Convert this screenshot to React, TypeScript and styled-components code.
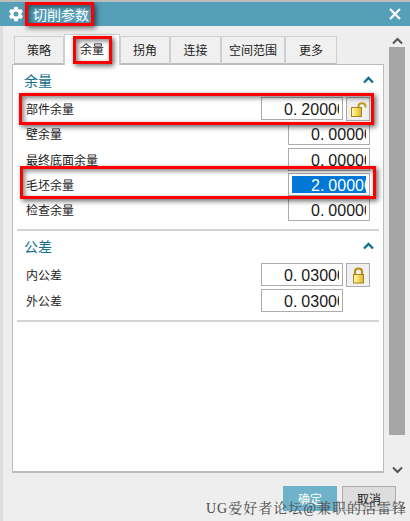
import * as React from 'react';
import styled, { createGlobalStyle } from 'styled-components';
import { IoSettingsSharp } from 'react-icons/io5';

const cjk = `"Noto Sans CJK SC", "Liberation Sans", sans-serif`;

const Global = createGlobalStyle`
  html, body {
    margin: 0;
    padding: 0;
    background: #eeeeee;
  }
`;

const Lock = ({ open }: { open?: boolean }) => {
  const id = open ? 'lock-open' : 'lock-closed';
  return (
    <svg width="18" height="18" viewBox="0 0 18 18">
      <defs>
        <linearGradient id={id} x1="0" y1="0" x2="1" y2="0">
          <stop offset="0" stopColor="#fff8b8" />
          <stop offset="0.45" stopColor="#f6e06a" />
          <stop offset="1" stopColor="#d8b02a" />
        </linearGradient>
      </defs>
      {open ? (
        <path d="M9.5 7.5V6C9.5 4 11 3.2 13 3.2S16.5 4 16.5 6V7.5" fill="none" stroke="#c89a18" strokeWidth="2" />
      ) : (
        <path d="M6 8.5V5.5C6 3.5 7.5 2.5 9.5 2.5S13 3.5 13 5.5V8.5" fill="none" stroke="#b98f18" strokeWidth="2.2" />
      )}
      <rect
        x={open ? 2.5 : 4.5}
        y={open ? 7.5 : 8.5}
        width={open ? 10 : 10}
        height={open ? 9 : 8.5}
        fill={`url(#${id})`}
        stroke="#a8831a"
      />
    </svg>
  );
};

const Chevron = ({ down, color, width }: { down?: boolean; color: string; width: number }) => (
  <svg width="11" height="8" viewBox="0 0 11 8">
    <path d={down ? 'M1 1.5L5.5 6L10 1.5' : 'M1 6.5L5.5 2L10 6.5'} fill="none" stroke={color} strokeWidth={width} />
  </svg>
);

// the dialog draws a wide gap after the decimal point
const NumberField = ({ value, selected }: { value: string; selected?: boolean }) => {
  const [whole, frac] = value.split('.');
  return (
    <Field>
      <Value $selected={selected}>
        {whole}.<Fraction>{frac}</Fraction>
      </Value>
    </Field>
  );
};

const tabs = ['策略', '余量', '拐角', '连接', '空间范围', '更多'];
const tabWidths = [50, 56, 50, 51, 64, 52];

const App = () => {
  return (
    <Page>
      <Global />
      <TitleBar>
        <IoSettingsSharp size={16} color="#ffffff" />
        <Title>切削参数</Title>
        <Close>
          <svg width="12" height="12" viewBox="0 0 12 12">
            <path d="M1 1L11 11M11 1L1 11" stroke="#ffffff" strokeWidth="2.2" />
          </svg>
        </Close>
      </TitleBar>
      <Body>
        <Main>
          <Tabs>
            {tabs.map((t, i) => (
              <Tab key={t} $active={i === 1} $width={tabWidths[i]}>{t}</Tab>
            ))}
          </Tabs>
          <Panel>
            <Section>
              <SectionHead>
                <SectionTitle>余量</SectionTitle>
                <Chevron color="#14708f" width={2.4} />
              </SectionHead>
              <Row>
                <Label>部件余量</Label>
                <NumberField value="0.20000" />
                <LockButton><Lock open /></LockButton>
              </Row>
              <Row $gap={3}>
                <Label>壁余量</Label>
                <NumberField value="0.00000" />
              </Row>
              <Row>
                <Label>最终底面余量</Label>
                <NumberField value="0.00000" />
              </Row>
              <Row>
                <Label>毛坯余量</Label>
                <NumberField value="2.00000" selected />
              </Row>
              <Row>
                <Label>检查余量</Label>
                <NumberField value="0.00000" />
              </Row>
            </Section>
            <Section>
              <SectionHead>
                <SectionTitle>公差</SectionTitle>
                <Chevron color="#14708f" width={2.4} />
              </SectionHead>
              <Row $gap={3}>
                <Label>内公差</Label>
                <NumberField value="0.03000" />
                <LockButton><Lock /></LockButton>
              </Row>
              <Row>
                <Label>外公差</Label>
                <NumberField value="0.03000" />
                <LockSpacer />
              </Row>
            </Section>
          </Panel>
          <Footer>
            <ConfirmButton>确定</ConfirmButton>
            <CancelButton>取消</CancelButton>
          </Footer>
        </Main>
        <Scrollbar>
          <ScrollArrow><Chevron color="#555555" width={2} /></ScrollArrow>
          <Thumb />
          <ScrollArrow><Chevron down color="#555555" width={2} /></ScrollArrow>
        </Scrollbar>
      </Body>
      <RedBox $x={25} $y={2} $w={69} $h={24} />
      <RedBox $x={73} $y={36} $w={39} $h={28} />
      <RedBox $x={19} $y={93} $w={355} $h={32} />
      <RedBox $x={20} $y={166} $w={356} $h={33} />
      <Watermark>UG爱好者论坛@兼职的活雷锋</Watermark>
    </Page>
  );
};

export default App;

const Page = styled.div`
  position: relative;
  width: 410px;
  height: 521px;
  overflow: hidden;
  display: flex;
  flex-direction: column;
  box-sizing: border-box;
  background: #eeeeee;
  border-top: 2px solid #bcbcbc;
  font-family: ${cjk};
  color: #1c1c1c;
`;

const TitleBar = styled.div`
  height: 24px;
  flex: none;
  display: flex;
  align-items: center;
  padding: 0 9px 0 8px;
  background: #559fb9;
  color: #ffffff;
`;

const Title = styled.div`
  margin-left: 9px;
  font-size: 14px;
  line-height: 24px;
`;

const Close = styled.div`
  margin-left: auto;
  display: flex;
`;

const Body = styled.div`
  flex: 1;
  display: flex;
  border-left: 3px solid #dedede;
  min-height: 0;
`;

const Main = styled.div`
  width: 372px;
  margin-left: 9px;
  flex: none;
  display: flex;
  flex-direction: column;
`;

const Tabs = styled.div`
  height: 38px;
  flex: none;
  box-sizing: border-box;
  padding-left: 2px;
  display: flex;
  align-items: flex-end;
`;

const Tab = styled.div<{ $active?: boolean; $width: number }>`
  box-sizing: border-box;
  width: ${p => p.$width}px;
  height: ${p => (p.$active ? 31 : 28)}px;
  margin-bottom: ${p => (p.$active ? -1 : 0)}px;
  border: 1px solid #cfcfcf;
  border-bottom: ${p => (p.$active ? 'none' : '1px solid #bdbdbd')};
  background: ${p => (p.$active ? '#ffffff' : '#f0f0f0')};
  position: relative;
  font-size: 12px;
  line-height: ${p => (p.$active ? 28 : 26)}px;
  text-align: center;
`;

const Panel = styled.div`
  box-sizing: border-box;
  height: 409px;
  flex: none;
  background: #ffffff;
  border: 1px solid #bdbdbd;
  border-width: 1px 1px 2px 1px;
  padding: 0 4px;
`;

const Section = styled.div`
  border-bottom: 2px solid #d4d4d4;
  padding-bottom: 6px;
`;

const SectionHead = styled.div`
  display: flex;
  align-items: center;
  justify-content: space-between;
  height: 30px;
  padding: 0 5px 0 7px;
  margin-bottom: 2px;
`;

const SectionTitle = styled.div`
  font-size: 14px;
  color: #14708f;
`;

const Row = styled.div<{ $gap?: number }>`
  display: flex;
  align-items: center;
  justify-content: flex-end;
  height: 23px;
  margin-bottom: ${p => p.$gap ?? 2}px;
  padding: 0 9px;
`;

const Label = styled.div`
  margin-right: auto;
  font-size: 12px;
  white-space: nowrap;
`;

const Field = styled.div`
  box-sizing: border-box;
  width: 82px;
  height: 23px;
  border: 1px solid #acacac;
  background: #ffffff;
  padding: 2px 3px;
`;

const Value = styled.div<{ $selected?: boolean }>`
  height: 17px;
  padding-left: 19px;
  overflow: hidden;
  white-space: nowrap;
  font-family: "Liberation Sans", sans-serif;
  font-size: 16px;
  line-height: 19px;
  background: ${p => (p.$selected ? '#0078d7' : 'transparent')};
  color: ${p => (p.$selected ? '#ffffff' : '#1a1a1a')};
`;

const Fraction = styled.span`
  margin-left: 4px;
`;

const LockButton = styled.div`
  box-sizing: border-box;
  width: 24px;
  height: 24px;
  margin-left: 3px;
  border: 1px solid #acacac;
  background: #f0f0f0;
  display: flex;
  align-items: center;
  justify-content: center;
`;

const LockSpacer = styled.div`
  width: 24px;
  margin-left: 3px;
`;

const Footer = styled.div`
  display: flex;
  justify-content: flex-end;
  gap: 5px;
  margin-top: 13px;
  margin-right: -12px;
`;

const ConfirmButton = styled.div`
  width: 54px;
  height: 25px;
  background: #6fb3ca;
  color: #ffffff;
  font-size: 12px;
  line-height: 25px;
  text-align: center;
`;

const CancelButton = styled.div`
  box-sizing: border-box;
  width: 54px;
  height: 25px;
  background: #dddddd;
  border: 1px solid #adadad;
  font-size: 12px;
  line-height: 23px;
  text-align: center;
`;

const Scrollbar = styled.div`
  width: 16px;
  margin-left: 5px;
  height: 454px;
  padding-top: 8px;
  flex: none;
  display: flex;
  flex-direction: column;
  align-items: center;
  box-sizing: border-box;
`;

const ScrollArrow = styled.div`
  height: 13px;
  display: flex;
  align-items: center;
  justify-content: center;
  &:last-child {
    margin-top: auto;
    margin-bottom: 4px;
  }
`;

const Thumb = styled.div`
  width: 16px;
  height: 388px;
  background: #a6a6a6;
  flex: none;
`;

const RedBox = styled.div<{ $x: number; $y: number; $w: number; $h: number }>`
  position: absolute;
  box-sizing: border-box;
  left: ${p => p.$x}px;
  top: ${p => p.$y - 2}px;
  width: ${p => p.$w}px;
  height: ${p => p.$h}px;
  border: 3px solid #ff0000;
  box-shadow: 2px 2px 5px rgba(0, 0, 0, 0.6), inset 2px 2px 5px rgba(0, 0, 0, 0.5);
`;

const Watermark = styled.div`
  position: absolute;
  left: 206px;
  top: 498px;
  font-family: "Liberation Serif", "Noto Serif CJK SC", "Noto Sans CJK SC", serif;
  font-size: 14px;
  letter-spacing: 1px;
  line-height: 18px;
  color: #4a4a4a;
  white-space: nowrap;
`;
